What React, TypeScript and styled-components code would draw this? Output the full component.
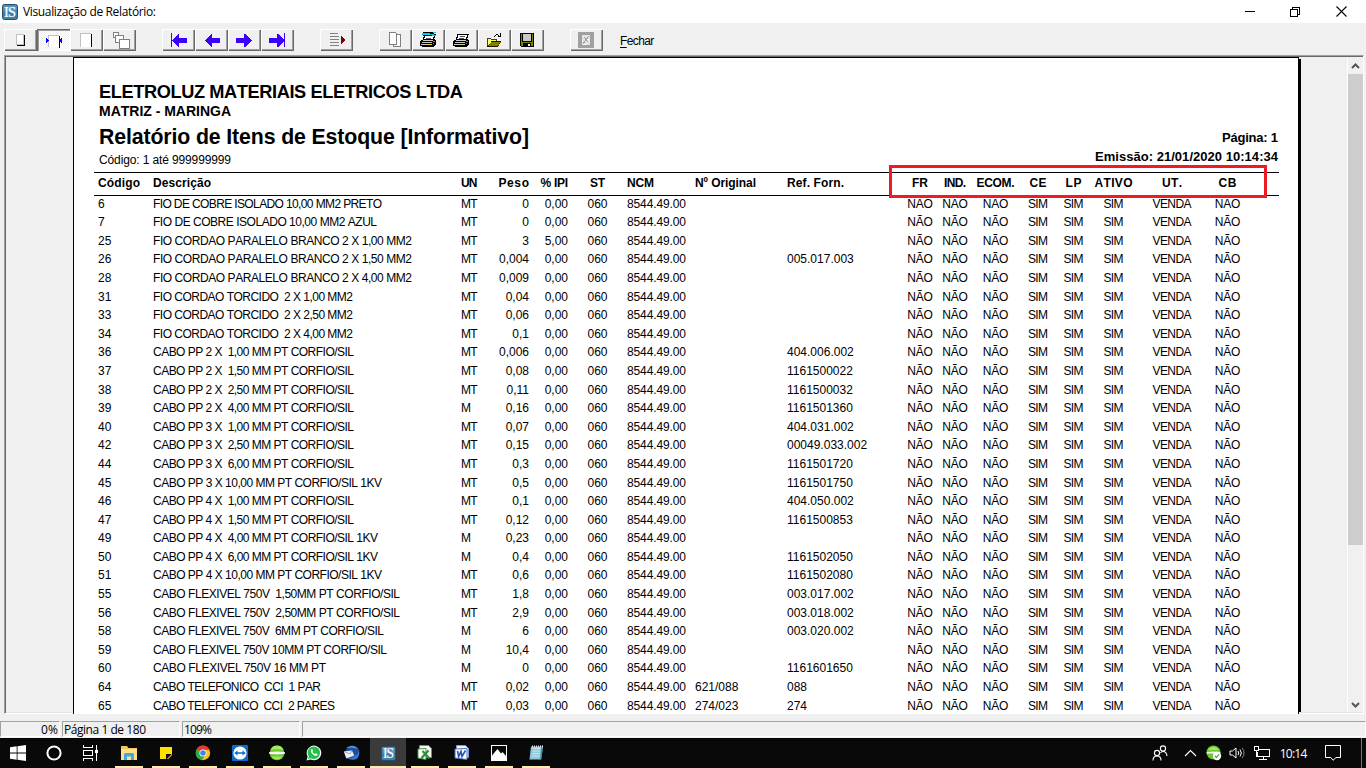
import React from "react";
import styled, { createGlobalStyle, css } from "styled-components";

const UI = `"Open Sans", "Noto Sans", sans-serif`;
const REPORT = `"Liberation Sans", Arial, sans-serif`;

const Global = createGlobalStyle`
  * { box-sizing: border-box; }
  body { margin: 0; overflow: hidden; background: #f0f0f0; font-family: ${UI}; font-size: 12px; color: #000; }
  svg { display: block; }
`;

const ctx = document.createElement("canvas").getContext("2d")!;

function spacingFor(text: string, width: number, size: number, bold: boolean, family: string) {
  ctx.font = `${bold ? "bold " : ""}${size}px ${family}`;
  ctx.fontKerning = "none";
  return (width - ctx.measureText(text).width) / Math.max(1, text.length - 1);
}

const Run = styled.span<{ $size: number; $bold: boolean; $family: string }>`
  font-family: ${(p) => p.$family};
  font-size: ${(p) => p.$size}px;
  font-weight: ${(p) => (p.$bold ? 700 : 400)};
  font-kerning: none;
  white-space: pre;
`;

type FitProps = { children: string; width: number; size?: number; bold?: boolean; family?: string };

function Fit({ children, width, size = 12, bold = false, family = REPORT }: FitProps) {
  const s = spacingFor(children, width, size, bold, family);
  return (
    <Run $size={size} $bold={bold} $family={family} style={{ letterSpacing: s, marginRight: -s }}>
      {children}
    </Run>
  );
}

/* ---------- window frame ---------- */

const Window = styled.div`
  width: 1366px;
  height: 768px;
  display: flex;
  flex-direction: column;
  overflow: hidden;
`;

const TitleBar = styled.header`
  height: 23px;
  flex: none;
  display: flex;
  align-items: center;
  padding-left: 2px;
  background: #fff;
`;

const Title = styled.div`
  flex: 1;
  margin-left: 5px;
  line-height: 22px;
`;

const WindowButtons = styled.div`
  display: flex;
  height: 20px;
`;

const WindowButton = styled.div<{ $w: number }>`
  width: ${(p) => p.$w}px;
  display: flex;
  align-items: center;
  justify-content: center;
`;

const Toolbar = styled.nav`
  height: 32px;
  flex: none;
  display: flex;
  align-items: flex-start;
  gap: 26px;
  padding: 6px 0 0 4px;
`;

const ToolGroup = styled.div`
  display: flex;
`;

const ToolButton = styled.div<{ $down?: boolean }>`
  width: 33px;
  height: 22px;
  display: flex;
  align-items: center;
  justify-content: center;
  background: #f0f0f0;
  box-shadow: inset 1px 1px #fff, inset -1px -1px #696969, inset -2px -2px #a0a0a0;
  ${(p) =>
    p.$down &&
    css`
      background: repeating-conic-gradient(#fff 0 25%, #f0f0f0 0 50%) 0 0 / 2px 2px;
      box-shadow: inset 1px 1px #696969, inset 2px 2px #a0a0a0, inset -1px -1px #fff;
    `}
`;

const CloseLabel = styled.div`
  margin-left: -9px;
  height: 24px;
  font: 12px/24px ${REPORT};
  letter-spacing: -0.6px;
  u { text-underline-offset: 2px; }
`;

/* ---------- preview area ---------- */

const Viewer = styled.main`
  height: 659px;
  flex: none;
  margin: 0 2px 0 4px;
  display: flex;
  border: 1px solid;
  border-color: #a0a0a0 #fff #fff #a0a0a0;
  box-shadow: inset 1px 1px #696969, inset -1px -1px #e3e3e3;
  padding: 2px 0 1px 68px;
`;

const Paper = styled.article`
  position: relative;
  width: 1226px;
  margin-top: -1px;
  height: 657px;
  flex: none;
  overflow: hidden;
  background: #fff;
  border: solid #000;
  border-width: 1px 1px 0 1px;
  padding: 0 19px 0 20px;
`;

const PaperShadow = styled.div`
  width: 2px;
  flex: none;
  margin-top: 1px;
  background: #000;
`;

const Desk = styled.div`
  flex: 1;
`;

const ScrollBar = styled.div`
  width: 16px;
  flex: none;
  display: flex;
  flex-direction: column;
  align-items: center;
  border-left: 1px solid #fff;
  background: #f0f0f0;
  padding-top: 4px;
`;

const Thumb = styled.div`
  width: 15px;
  height: 471px;
  margin: 5px 0 auto;
  background: #cdcdcd;
`;

/* ---------- report ---------- */

const ReportHead = styled.header`
  height: 114px;
  display: flex;
  justify-content: space-between;
  padding-left: 5px;
`;

const HeadColumn = styled.div<{ $right?: boolean }>`
  display: flex;
  flex-direction: column;
  align-items: ${(p) => (p.$right ? "flex-end" : "flex-start")};
  padding-top: ${(p) => (p.$right ? 70 : 24)}px;
  padding-right: ${(p) => (p.$right ? 1 : 0)}px;
`;

const HeadLine = styled.div<{ $h: number }>`
  height: ${(p) => p.$h}px;
  line-height: ${(p) => p.$h}px;
  display: flex;
`;

const grid = css`
  display: grid;
  grid-template-columns:
    55px 308px 29px 39px 39px 59px 68px 92px 114px
    38px 32px 49px 36px 35px 45px 72px 39px;
  padding-left: 4px;
`;

const ColumnHeads = styled.div`
  ${grid}
  height: 24px;
  line-height: 21px;
  border-top: 1px solid #000;
  border-bottom: 1px solid #000;
`;

const Rows = styled.div`
  margin-top: -1.4px;
`;

const Row = styled.div`
  ${grid}
  height: 18.6px;
  font: 12px/19px ${REPORT};
`;

const Cell = styled.div<{ $align?: string }>`
  display: flex;
  justify-content: ${(p) => p.$align ?? "flex-start"};
  min-width: 0;
  white-space: pre;
`;

const Highlight = styled.div`
  position: absolute;
  left: 815px;
  top: 107px;
  width: 378px;
  height: 33px;
  border: 3px solid #ed1c24;
`;

type Column = { label: string; w: number; align?: string };

const columns: Column[] = [
  { label: "Código", w: 42 },
  { label: "Descrição", w: 58 },
  { label: "UN", w: 16.5 },
  { label: "Peso", w: 30.5, align: "flex-end" },
  { label: "% IPI", w: 27.5, align: "flex-end" },
  { label: "ST", w: 15, align: "center" },
  { label: "NCM", w: 27 },
  { label: "Nº Original", w: 61 },
  { label: "Ref. Forn.", w: 57 },
  { label: "FR", w: 16, align: "center" },
  { label: "IND.", w: 22, align: "center" },
  { label: "ECOM.", w: 38, align: "center" },
  { label: "CE", w: 17, align: "center" },
  { label: "LP", w: 16, align: "center" },
  { label: "ATIVO", w: 38, align: "center" },
  { label: "UT.", w: 20, align: "center" },
  { label: "CB", w: 18, align: "center" },
];

const flags: [string, number][] = [
  ["NÃO", 25.5], ["NÃO", 25.5], ["NÃO", 25.5], ["SIM", 20],
  ["SIM", 20], ["SIM", 20], ["VENDA", 39], ["NÃO", 25.5],
];

type Item = [string, string, number, string, string, string, string, string];

const items: Item[] = [
  ["6", "FIO DE COBRE ISOLADO 10,00 MM2 PRETO", 229, "MT", "0", "0,00", "", ""],
  ["7", "FIO DE COBRE ISOLADO 10,00 MM2 AZUL", 224, "MT", "0", "0,00", "", ""],
  ["25", "FIO CORDAO PARALELO BRANCO 2 X 1,00 MM2", 259, "MT", "3", "5,00", "", ""],
  ["26", "FIO CORDAO PARALELO BRANCO 2 X 1,50 MM2", 259, "MT", "0,004", "0,00", "", "005.017.003"],
  ["28", "FIO CORDAO PARALELO BRANCO 2 X 4,00 MM2", 259, "MT", "0,009", "0,00", "", ""],
  ["31", "FIO CORDAO TORCIDO  2 X 1,00 MM2", 200, "MT", "0,04", "0,00", "", ""],
  ["33", "FIO CORDAO TORCIDO  2 X 2,50 MM2", 200, "MT", "0,06", "0,00", "", ""],
  ["34", "FIO CORDAO TORCIDO  2 X 4,00 MM2", 200, "MT", "0,1", "0,00", "", ""],
  ["36", "CABO PP 2 X  1,00 MM PT CORFIO/SIL", 201, "MT", "0,006", "0,00", "", "404.006.002"],
  ["37", "CABO PP 2 X  1,50 MM PT CORFIO/SIL", 201, "MT", "0,08", "0,00", "", "1161500022"],
  ["38", "CABO PP 2 X  2,50 MM PT CORFIO/SIL", 201, "MT", "0,11", "0,00", "", "1161500032"],
  ["39", "CABO PP 2 X  4,00 MM PT CORFIO/SIL", 201, "M", "0,16", "0,00", "", "1161501360"],
  ["40", "CABO PP 3 X  1,00 MM PT CORFIO/SIL", 201, "MT", "0,07", "0,00", "", "404.031.002"],
  ["42", "CABO PP 3 X  2,50 MM PT CORFIO/SIL", 201, "MT", "0,15", "0,00", "", "00049.033.002"],
  ["44", "CABO PP 3 X  6,00 MM PT CORFIO/SIL", 201, "MT", "0,3", "0,00", "", "1161501720"],
  ["45", "CABO PP 3 X 10,00 MM PT CORFIO/SIL 1KV", 229, "MT", "0,5", "0,00", "", "1161501750"],
  ["46", "CABO PP 4 X  1,00 MM PT CORFIO/SIL", 201, "MT", "0,1", "0,00", "", "404.050.002"],
  ["47", "CABO PP 4 X  1,50 MM PT CORFIO/SIL", 201, "MT", "0,12", "0,00", "", "1161500853"],
  ["49", "CABO PP 4 X  4,00 MM PT CORFIO/SIL 1KV", 225, "M", "0,23", "0,00", "", ""],
  ["50", "CABO PP 4 X  6,00 MM PT CORFIO/SIL 1KV", 225, "M", "0,4", "0,00", "", "1161502050"],
  ["51", "CABO PP 4 X 10,00 MM PT CORFIO/SIL 1KV", 229, "MT", "0,6", "0,00", "", "1161502080"],
  ["55", "CABO FLEXIVEL 750V  1,50MM PT CORFIO/SIL", 247, "MT", "1,8", "0,00", "", "003.017.002"],
  ["56", "CABO FLEXIVEL 750V  2,50MM PT CORFIO/SIL", 247, "MT", "2,9", "0,00", "", "003.018.002"],
  ["58", "CABO FLEXIVEL 750V  6MM PT CORFIO/SIL", 231, "M", "6", "0,00", "", "003.020.002"],
  ["59", "CABO FLEXIVEL 750V 10MM PT CORFIO/SIL", 234, "M", "10,4", "0,00", "", ""],
  ["60", "CABO FLEXIVEL 750V 16 MM PT", 173, "M", "0", "0,00", "", "1161601650"],
  ["64", "CABO TELEFONICO  CCI  1 PAR", 168, "MT", "0,02", "0,00", "621/088", "088"],
  ["65", "CABO TELEFONICO  CCI  2 PARES", 182, "MT", "0,03", "0,00", "274/023", "274"],
];

/* ---------- status bar and taskbar ---------- */

const StatusBar = styled.footer`
  height: 24px;
  flex: none;
  display: flex;
  gap: 2px;
  padding: 7px 0 0;
`;

const StatusPane = styled.div<{ $w?: number; $right?: boolean }>`
  ${(p) => (p.$w ? `width: ${p.$w}px; flex: none;` : "flex: 1;")}
  height: 16px;
  display: flex;
  justify-content: ${(p) => (p.$right ? "flex-end" : "flex-start")};
  border: 1px solid;
  border-color: #a0a0a0 #fff #fff #a0a0a0;
  padding: 0 1px 0 1px;
  line-height: 15px;
`;

const Taskbar = styled.footer`
  height: 30px;
  flex: none;
  display: flex;
  background: #090909;
  color: #fff;
`;

const SystemButton = styled.div<{ $w: number }>`
  width: ${(p) => p.$w}px;
  display: flex;
  align-items: center;
  justify-content: center;
`;

const Tasks = styled.div`
  flex: 1;
  display: flex;
  gap: 9px;
  margin-left: 6px;
`;

const Task = styled.div<{ $active?: boolean }>`
  width: ${(p) => (p.$active ? 36 : 28)}px;
  margin: ${(p) => (p.$active ? "0 -4px" : "0")};
  display: flex;
  align-items: center;
  justify-content: center;
  padding-top: 2px;
  background: ${(p) => (p.$active ? "#3b3b3b" : "transparent")};
  border-bottom: 2px solid #fdebab;
`;

const Tray = styled.div`
  display: flex;
  align-items: center;
`;

const TraySlot = styled.div<{ $w: number }>`
  width: ${(p) => p.$w}px;
  display: flex;
  justify-content: center;
`;

const ShowDesktop = styled.div`
  width: 5px;
  height: 30px;
  border-left: 1px solid #777;
`;

/* ---------- icons ---------- */

type IconProps = { w: number; h?: number; crisp?: boolean; children: React.ReactNode };
const Icon = ({ w, h = w, crisp, children }: IconProps) => (
  <svg width={w} height={h} viewBox={`0 0 ${w} ${h}`} fill="none" shapeRendering={crisp ? "crispEdges" : "auto"}>
    {children}
  </svg>
);

const AppIcon = ({ size }: { size: number }) => (
  <svg width={size} height={size} viewBox="0 0 16 16">
    <rect x=".5" y=".5" width="15" height="15" rx="2" fill="#3f7fa8" stroke="#24506c" />
    <rect x="1.500" y="1.500" width="13" height="6" rx="1" fill="#5795bd" />
    <text x="2" y="13" fontFamily="Liberation Serif" fontSize="14.500" fill="#fff" stroke="#fff" strokeWidth=".2" textLength="12">IS</text>
  </svg>
);

const WholePage = () => (
  <Icon w={21} h={18} crisp>
    <path d="M6.500 3.500h7v10h-7z" fill="#fff" stroke="#c0c0c0" />
    <path d="M14.500 4v11M7 14.500h8" stroke="#000" />
  </Icon>
);

const PageWidth = () => (
  <Icon w={21} h={18} crisp>
    <path d="M5 4h11v12H5z" fill="#fff" />
    <path d="M5.500 16V4.500H16" stroke="#c0c0c0" />
    <path d="M16.500 5v12" stroke="#000" />
    <path d="M3 7h1v1h1v1h1v1H5v1H4v1H3zM19 7h-1v1h-1v1h-1v1h1v1h1v1h1z" fill="#0000ff" />
  </Icon>
);

const FullPage = () => (
  <Icon w={21} h={18} crisp>
    <path d="M4 2h11v14H4z" fill="#fff" />
    <path d="M4.500 16V2.500H15" stroke="#c0c0c0" />
    <path d="M15.500 3v13" stroke="#000" />
  </Icon>
);

const Thumbnails = () => (
  <Icon w={21} h={18} crisp>
    <path d="M4.500 1.500h5v5h-5z" fill="#fff" stroke="#808080" />
    <path d="M6.500 4.500h8v7h-8z" fill="#fff" stroke="#808080" />
    <path d="M10.500 8.500h10v9h-10z" fill="#fff" stroke="#808080" />
  </Icon>
);

const Arrow = ({ left, stop }: { left?: boolean; stop?: boolean }) => (
  <Icon w={17} h={14} crisp>
    <g transform={left ? "matrix(-1 0 0 1 17 0)" : undefined}>
      <path d="M0 5h8V1h1l6.500 6.500L9 14H8v-4H0z" fill="#3c00ff" />
      {stop && <path d="M15.500 0v14" stroke="#3c00ff" />}
    </g>
  </Icon>
);

const GoTo = () => (
  <Icon w={18} h={16} crisp>
    <path d="M2 1.500h8M2 4.500h9M2 7.500h9M2 10.500h9M2 13.500h9" stroke="#808080" />
    <path d="M13 4h1v1h1v1h1v1h1v2h-1v1h-1v1h-1v1h-1z" fill="#800000" />
  </Icon>
);

const Copy = () => (
  <Icon w={16} h={16} crisp>
    <path d="M5.500 2.500h7v12h-7z" fill="#fff" stroke="#808080" />
    <path d="M1.500.500h6l1 1v11h-7z" fill="#fff" stroke="#808080" />
  </Icon>
);

const PrinterIcon = ({ setup }: { setup?: boolean }) => (
  <Icon w={17} h={16} crisp>
    <path d="M5 2.500h10l-2 6H3z" fill="#fff" stroke="#000" />
    <path d="M7 4.500h5M6 6.500h5" stroke="#555" />
    <path d="M0 9h1V8h2V7h12v1h1v5h-1v1h-1v1H2v-1H0z" fill="#000" />
    <path d="M3 8h10v1H3zM2 10h10v1H2zM1 12h11v1H1z" fill="#c8c8c8" />
    <path d="M13 9h2v1h-2zM13 11h1v1h-1z" fill="#808080" />
    <path d="M8 12h3v1H8z" fill="#f0e000" />
    {setup && (
      <>
        <path d="M3 0h11v4H3z" fill="#000" />
        <path d="M2 1h8v2H2zM10 2h4v1h-4zM13 0h3v1h-3zM12 3h4v1h-4z" fill="#00d0d8" />
        <path d="M5 4h7v1H5z" fill="#fff" />
      </>
    )}
  </Icon>
);

const OpenIcon = () => (
  <Icon w={15} h={15} crisp>
    <path d="M.5 13.500V5.500h3l1 1h5v3H5z" fill="#ffff60" stroke="#000" strokeOpacity=".75" />
    <path d="M1 14l4-6h9v1l-3 5z" fill="#808000" />
    <path d="M0 13h11v1H0zM4 8h10v1H4zM12 10h1v1h-1zM11 12h1v1h-1z" fill="#000" opacity=".8" />
    <path d="M7 3h1V2h1V1h2v1h1v1h-1V2H9v1H8v1H7zM13 0h1v4h-3V3h2z" fill="#000" />
  </Icon>
);

const SaveIcon = () => (
  <Icon w={15} h={15} crisp>
    <path d="M.5.500h13v13h-12l-1-1z" fill="#808000" stroke="#000" />
    <path d="M3 1h8v7H3z" fill="#c8c8c8" />
    <path d="M2.500 1v7.500h9V1" stroke="#000" />
    <path d="M3 10h8v4H3z" fill="#000" />
    <path d="M8 11h2v2H8z" fill="#fff" />
  </Icon>
);

const StopIcon = () => (
  <Icon w={17} h={16} crisp>
    <path d="M0 0h16v16H0z" fill="#a0a0a0" />
    <path d="M4 3h8v10H4z" fill="#e4e4e4" />
    <path d="M5 12l6-8M6 5l4 5" stroke="#a0a0a0" />
    <path d="M5 12h3M9 7h2" stroke="#fff" />
  </Icon>
);

const tasks: { icon: React.ReactNode; active?: boolean }[] = [
  {
    icon: (
      <Icon w={18} h={16}>
        <path d="M1 1h6l1.500 2H17v12H1z" fill="#f5c75a" />
        <path d="M1 4h16v11H1z" fill="#ffe08a" />
        <path d="M4 15V9l1-1h8l1 1v6h-3v-3.500H7V15z" fill="#3fa9e0" />
      </Icon>
    ),
  },
  {
    icon: (
      <Icon w={14}>
        <path d="M1 1h12v8l-4 4H1z" fill="#ffe100" />
        <path d="M7 8h6l-5 5H7z" fill="#111" />
        <path d="M8 13l5-5v1l-4 4z" fill="#d7a800" />
      </Icon>
    ),
  },
  {
    icon: (
      <Icon w={16}>
        <circle cx="8" cy="8" r="7.200" fill="#fbc116" />
        <path d="M8 8L1.600 4.600A7.200 7.200 0 0 1 14.400 4.700z" fill="#e33b2e" />
        <path d="M8 8L1.600 4.600A7.200 7.200 0 0 0 7.200 15.200L10 10z" fill="#2da94f" />
        <path d="M8 4.700h6.400L10 10z" fill="#fbc116" />
        <path d="M5 4.700h9.400A7 7 0 0 0 1.600 4.600z" fill="#e33b2e" />
        <circle cx="8" cy="8" r="3.600" fill="#fff" />
        <circle cx="8" cy="8" r="2.800" fill="#3f83f0" />
      </Icon>
    ),
  },
  {
    icon: (
      <Icon w={16}>
        <rect width="16" height="16" rx="1" fill="#0d6bd0" />
        <circle cx="8" cy="8" r="6.600" fill="#fff" />
        <path d="M2.200 8L5.500 5.500v1.700h5V5.500L13.800 8l-3.300 2.500V8.800h-5v1.700z" fill="#0d6bd0" />
      </Icon>
    ),
  },
  {
    icon: (
      <Icon w={16}>
        <circle cx="8" cy="8" r="7.300" fill="#6cc62e" />
        <path d="M1.500 5a7 7 0 0 1 13 0Q8 3.500 1.500 5z" fill="#a8e668" />
        <path d="M.2 7Q8 6.200 15.800 7v2Q8 9.800.2 9z" fill="#f4f4f4" />
        <path d="M2.500 11.500h11a7 7 0 0 1-11 0z" fill="#a2e852" />
      </Icon>
    ),
  },
  {
    icon: (
      <Icon w={16}>
        <path d="M.5 15.500l1.100-4A7.300 7.300 0 1 1 4.600 14.400z" fill="#fff" />
        <path d="M2 14l.8-2.700A6.200 6.200 0 1 1 5 13.200z" fill="#25c04b" />
        <path d="M5.600 4.200c-1.500 1-.7 3.100.6 4.500s3.700 2.900 5 1.600c.5-.6.5-1 .1-1.300l-1.500-.8-.9.900c-1-.3-2-1.300-2.400-2.300l.7-.9-.7-1.600z" fill="#fff" />
      </Icon>
    ),
  },
  {
    icon: (
      <Icon w={17} h={16}>
        <circle cx="9.500" cy="7.500" r="7" fill="#1d4f9c" />
        <path d="M3 3Q10-1.500 15 4q-5-2.500-12-1z" fill="#62a4e4" />
        <path d="M.8 6.500l8-1 2.500 5-8 3z" fill="#f1f1f1" />
        <path d="M1 6.500l6 2.500 2-3.500" stroke="#9aa8b8" />
        <path d="M3 12.500q4 2 8-1 4-1.500 4.500-5.500 2 5-2 8-5 2-10.500-1.500z" fill="#3878cc" />
      </Icon>
    ),
  },
  { icon: <AppIcon size={15} />, active: true },
  {
    icon: (
      <Icon w={16}>
        <path d="M2.500.500h9l3 3v9h-12z" fill="#f4faf2" stroke="#4fa64a" />
        <path d="M1 4l8-.5v11L1 13z" fill="#fff" stroke="#3c9a3c" />
        <path d="M5.500 6l7 7.500M11.500 5.500l-7 7.500" stroke="#2f8f3a" strokeWidth="2.300" />
      </Icon>
    ),
  },
  {
    icon: (
      <Icon w={16}>
        <path d="M2.500.500h9l3 3v9h-12z" fill="#eef3fc" stroke="#7a96d6" />
        <path d="M1 4l12-.5v11L1 13z" fill="#fff" stroke="#4a6cc0" />
        <path d="M3.500 6l1.200 5.500L7 6.500l1 5L11.500 5.500" stroke="#2f55b0" strokeWidth="1.700" />
      </Icon>
    ),
  },
  {
    icon: (
      <Icon w={16}>
        <path d="M0 0h16v16H0z" fill="#fff" />
        <path d="M1 1h14v10L11.500 7 10 8.500 6.500 4 1 11z" fill="#080808" />
        <path d="M1 10.500L6 5l4.500 5.500z" fill="#fff" />
      </Icon>
    ),
  },
  {
    icon: (
      <Icon w={16}>
        <path d="M3 1.500h12l-2 13H1.500z" fill="#8fc9d8" />
        <path d="M5 3.500h8M4.700 6h8M4.300 8.500h8M4 11h8" stroke="#c6e8f0" />
        <path d="M13 2h2l-1.700 12.500H12z" fill="#3f8fa5" />
        <path d="M4 1.500h11" stroke="#dce6ea" strokeDasharray="1 1" strokeWidth="2" />
      </Icon>
    ),
  },
];

export default function App() {
  return (
    <Window>
      <Global />
      <TitleBar>
        <AppIcon size={16} />
        <Title>
          <Fit width={133} family={UI}>Visualização de Relatório:</Fit>
        </Title>
        <WindowButtons>
          <WindowButton $w={44}>
            <Icon w={10} crisp><path d="M0 4.500h10" stroke="#000" /></Icon>
          </WindowButton>
          <WindowButton $w={46}>
            <Icon w={10} crisp><path d="M.5 2.500h7v7h-7zM2.500 2V.5h7v7H8" stroke="#000" /></Icon>
          </WindowButton>
          <WindowButton $w={46}>
            <Icon w={11}><path d="M.5.500l10 10M10.500.500l-10 10" stroke="#000" strokeWidth="1.100" /></Icon>
          </WindowButton>
          <WindowButton $w={2} />
        </WindowButtons>
      </TitleBar>

      <Toolbar>
        <ToolGroup>
          <ToolButton><WholePage /></ToolButton>
          <ToolButton $down><PageWidth /></ToolButton>
          <ToolButton><FullPage /></ToolButton>
          <ToolButton><Thumbnails /></ToolButton>
        </ToolGroup>
        <ToolGroup>
          <ToolButton><Arrow left stop /></ToolButton>
          <ToolButton><Arrow left /></ToolButton>
          <ToolButton><Arrow /></ToolButton>
          <ToolButton><Arrow stop /></ToolButton>
        </ToolGroup>
        <ToolGroup>
          <ToolButton><GoTo /></ToolButton>
        </ToolGroup>
        <ToolGroup>
          <ToolButton><Copy /></ToolButton>
          <ToolButton><PrinterIcon setup /></ToolButton>
          <ToolButton><PrinterIcon /></ToolButton>
          <ToolButton><OpenIcon /></ToolButton>
          <ToolButton><SaveIcon /></ToolButton>
        </ToolGroup>
        <ToolGroup>
          <ToolButton><StopIcon /></ToolButton>
        </ToolGroup>
        <CloseLabel><u>F</u>echar</CloseLabel>
      </Toolbar>

      <Viewer>
        <Paper>
          <ReportHead>
            <HeadColumn>
              <HeadLine $h={21}><Fit width={364} size={18.2} bold>ELETROLUZ MATERIAIS ELETRICOS LTDA</Fit></HeadLine>
              <HeadLine $h={17}><Fit width={132} size={14} bold>MATRIZ - MARINGA</Fit></HeadLine>
              <HeadLine $h={35}><Fit width={430} size={21.3} bold>Relatório de Itens de Estoque [Informativo]</Fit></HeadLine>
              <HeadLine $h={10}><Fit width={132}>Código: 1 até 999999999</Fit></HeadLine>
            </HeadColumn>
            <HeadColumn $right>
              <HeadLine $h={19}><Fit width={56} size={13} bold>Página: 1</Fit></HeadLine>
              <HeadLine $h={19}><Fit width={183} size={13} bold>Emissão: 21/01/2020 10:14:34</Fit></HeadLine>
            </HeadColumn>
          </ReportHead>
          <ColumnHeads>
            {columns.map((c) => (
              <Cell key={c.label} $align={c.align}>
                <Fit width={c.w} bold>{c.label}</Fit>
              </Cell>
            ))}
          </ColumnHeads>
          <Rows>
            {items.map(([code, name, width, unit, weight, ipi, original, ref]) => (
              <Row key={code}>
                <Cell>{code}</Cell>
                <Cell><Fit width={width}>{name}</Fit></Cell>
                <Cell>{unit === "MT" ? <Fit width={16.5}>MT</Fit> : unit}</Cell>
                <Cell $align="flex-end">{weight}</Cell>
                <Cell $align="flex-end">{ipi}</Cell>
                <Cell $align="center">060</Cell>
                <Cell><Fit width={59}>8544.49.00</Fit></Cell>
                <Cell>{original}</Cell>
                <Cell>{ref}</Cell>
                {flags.map(([text, w], i) => (
                  <Cell key={i} $align="center"><Fit width={w}>{text}</Fit></Cell>
                ))}
              </Row>
            ))}
          </Rows>
          <Highlight />
        </Paper>
        <PaperShadow />
        <Desk />
        <ScrollBar>
          <Icon w={9} h={7}><path d="M1 6l3.500-3.500L8 6" stroke="#555" strokeWidth="2" /></Icon>
          <Thumb />
          <Icon w={9} h={10}><path d="M1 1l3.500 3.500L8 1" stroke="#555" strokeWidth="2" /></Icon>
        </ScrollBar>
      </Viewer>

      <StatusBar>
        <StatusPane $w={60} $right><Fit width={17} family={UI}>0%</Fit></StatusPane>
        <StatusPane $w={118}><Fit width={82} family={UI}>Página 1 de 180</Fit></StatusPane>
        <StatusPane $w={118}><Fit width={28} family={UI}>109%</Fit></StatusPane>
        <StatusPane />
      </StatusBar>

      <Taskbar>
        <SystemButton $w={36}>
          <Icon w={16}><path d="M0 2.300L6.700 1.300V7.600H0zM7.500 1.200L16 0v7.600H7.500zM0 8.400h6.700v6.300L0 13.700zM7.500 8.400H16V16l-8.500-1.200z" fill="#fff" /></Icon>
        </SystemButton>
        <SystemButton $w={36}>
          <Icon w={16}><circle cx="8" cy="8" r="6.600" stroke="#fff" strokeWidth="2" /></Icon>
        </SystemButton>
        <SystemButton $w={37}>
          <Icon w={17} h={16} crisp>
            <path d="M1.500 0v2.500h9V0M1.500 16v-2.500h9V16M1.500 5.500h9v5h-9zM14.500 0v16" stroke="#fff" />
            <path d="M13 5h3v3h-3z" fill="#fff" />
          </Icon>
        </SystemButton>
        <Tasks>
          {tasks.map((t, i) => (
            <Task key={i} $active={t.active}>{t.icon}</Task>
          ))}
        </Tasks>
        <Tray>
          <TraySlot $w={30}>
            <Icon w={16}>
              <circle cx="5" cy="8" r="2.600" stroke="#fff" strokeWidth="1.100" />
              <path d="M1 15.500q0-4.500 4-4.500t4 4.500" stroke="#fff" strokeWidth="1.100" />
              <circle cx="11" cy="3.500" r="2.600" stroke="#fff" strokeWidth="1.100" />
              <path d="M8.500 8q1-1.500 2.500-1.500 3.500 0 4 4.500" stroke="#fff" strokeWidth="1.100" />
            </Icon>
          </TraySlot>
          <TraySlot $w={30}>
            <Icon w={13} h={8}><path d="M1 7l5.500-5.500L12 7" stroke="#fff" strokeWidth="1.200" /></Icon>
          </TraySlot>
          <TraySlot $w={18}>
            <Icon w={16}>
              <circle cx="7.500" cy="7.500" r="7" fill="#6cc62e" />
              <path d="M2 5a6.500 6.500 0 0 1 11 0z" fill="#a5e56a" />
              <path d="M.7 7Q8 6 14.300 7v1.500H.7z" fill="#f4f4f4" />
              <circle cx="11" cy="11" r="4.200" fill="#fff" />
              <path d="M9 11l1.500 1.600 2.500-3.200" stroke="#5c9c3a" strokeWidth="1.300" />
            </Icon>
          </TraySlot>
          <TraySlot $w={28}>
            <Icon w={17} h={14}>
              <path d="M1 5v4h2.500L7 12V2L3.500 5z" stroke="#fff" />
              <path d="M9 5q1.500 2 0 4M11 3.500q2.700 3.500 0 7" stroke="#fff" />
              <path d="M13.200 2q3.800 5 0 10" stroke="#888" />
            </Icon>
          </TraySlot>
          <TraySlot $w={22}>
            <Icon w={16} h={14} crisp>
              <path d="M4 3.500h11.500v7H3.500V6M9.500 11v2M5 13.500h8" stroke="#fff" />
              <path d="M.5.500h4v4h-4zM2.500 5v2M2.500 7v3.500h1" stroke="#fff" />
            </Icon>
          </TraySlot>
          <TraySlot $w={41}><Fit width={27.5} family={UI}>10:14</Fit></TraySlot>
          <TraySlot $w={37}>
            <Icon w={16}><path d="M.5.500h15v12h-4.500L8 15.300 5.800 12.500H.5z" stroke="#fff" /></Icon>
          </TraySlot>
        </Tray>
        <Tray><TraySlot $w={10} /><ShowDesktop /></Tray>
      </Taskbar>
    </Window>
  );
}
